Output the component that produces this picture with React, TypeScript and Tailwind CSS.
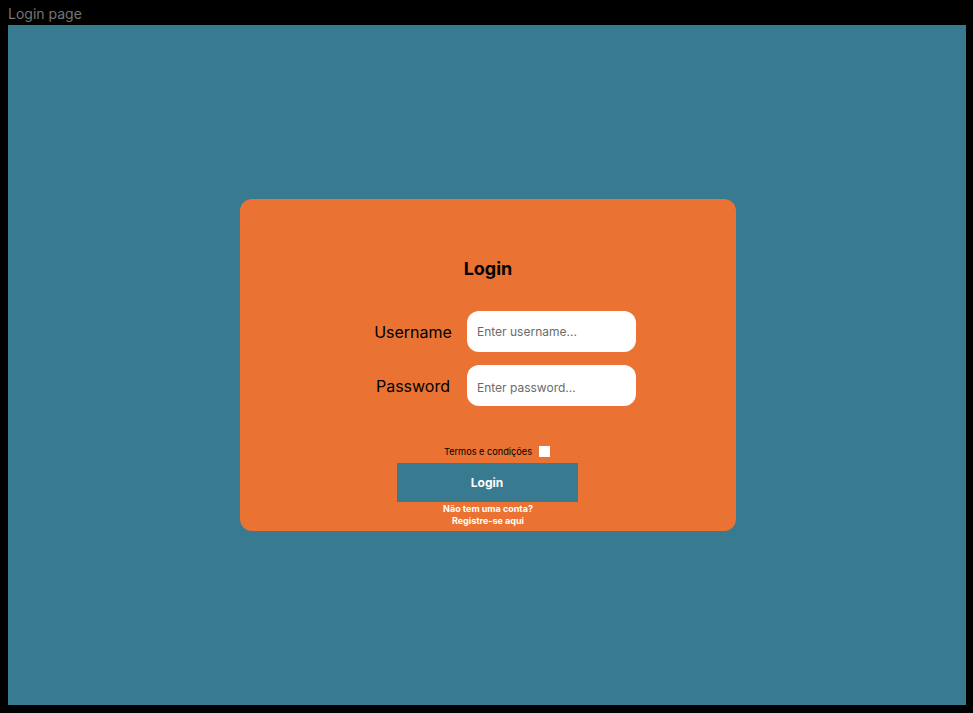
import React from "react";

export default function App() {
  return (
    <div className="w-[973px] h-[713px] bg-black flex flex-col" style={{ fontFamily: "Inter, 'Noto Sans', sans-serif" }}>
      <div className="h-[25px] pl-[8px] flex items-center text-[14px] leading-none text-[#757575] pt-[3px]">Login page</div>
      <div className="ml-[8px] w-[958px] h-[680px] bg-[#387a8f] flex items-center justify-center">
        <div className="ml-[2px] w-[496px] h-[332px] bg-[#ea7232] rounded-[12px] flex flex-col items-center pt-[58px]">
          <h1 className="text-[18px] leading-[24px] font-bold text-black">Login</h1>
          <div className="mt-[30px] w-[268px] ml-[28px] flex flex-col gap-[13px]">
            <div className="flex items-center">
              <label className="w-[90px] text-center text-[16px] text-black">Username</label>
              <input
                className="ml-[9px] w-[169px] h-[41px] rounded-[12px] bg-white px-[10px] text-[12px] text-black placeholder:text-[#6b6b6b] outline-none"
                placeholder="Enter username..."
              />
            </div>
            <div className="flex items-center">
              <label className="w-[90px] text-center text-[16px] text-black">Password</label>
              <input
                type="password"
                className="ml-[9px] w-[169px] h-[41px] rounded-[12px] bg-white px-[10px] pt-[4px] text-[12px] text-black placeholder:text-[#6b6b6b] outline-none"
                placeholder="Enter password..."
              />
            </div>
          </div>
          <div className="mt-[40px] ml-[18px] flex items-center gap-[7px] h-[11px]">
            <span className="text-[9.2px] text-black leading-none">Termos e condições</span>
            <span className="w-[11px] h-[11px] bg-white inline-block"></span>
          </div>
          <button className="mt-[6px] mr-[2px] w-[181px] h-[39px] bg-[#387a8f] text-white text-[12px] font-bold">Login</button>
          <div className="mt-[1px] text-white text-[9px] font-bold leading-[12px] text-center">
            <div>Não tem uma conta?</div>
            <div>Registre-se aqui</div>
          </div>
        </div>
      </div>
    </div>
  );
}
